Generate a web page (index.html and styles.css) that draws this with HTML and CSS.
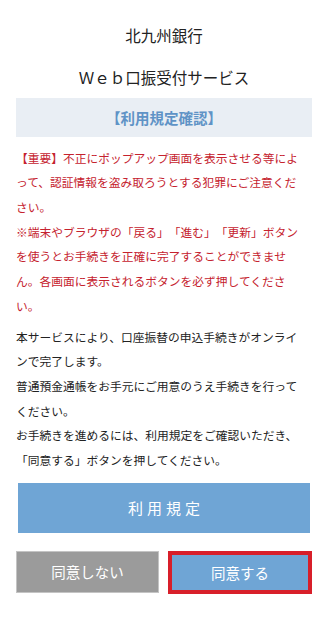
FILE: index.html
```html
<!DOCTYPE html>
<html lang="ja">
<head>
<meta charset="utf-8">
<title>北九州銀行 Ｗｅｂ口振受付サービス</title>
<link rel="stylesheet" href="styles.css">
</head>
<body>
<div class="page">
  <h1 class="bank">北九州銀行</h1>
  <h2 class="service">Ｗｅｂ口振受付サービス</h2>
  <div class="section-title">【利用規定確認】</div>
  <p class="notice">【重要】不正にポップアップ画面を表示させる等によって、認証情報を盗み取ろうとする犯罪にご注意ください。<br>※端末やブラウザの「戻る」「進む」「更新」ボタンを使うとお手続きを正確に完了することができません。各画面に表示されるボタンを必ず押してください。</p>
  <p class="body-text">本サービスにより、口座振替の申込手続きがオンラインで完了します。<br>普通預金通帳をお手元にご用意のうえ手続きを行ってください。<br>お手続きを進めるには、利用規定をご確認いただき、「同意する」ボタンを押してください。</p>
  <button class="btn btn-terms" type="button">利用規定</button>
  <div class="actions">
    <button class="btn btn-decline" type="button">同意しない</button>
    <button class="btn btn-agree" type="button">同意する</button>
  </div>
</div>
</body>
</html>
```
FILE: styles.css
```css
* { box-sizing: border-box; }
html, body {
  margin: 0;
  padding: 0;
  background: #ffffff;
}
body {
  font-family: "Noto Sans CJK JP", "Noto Sans", sans-serif;
  color: #222222;
  text-spacing-trim: space-all;
}
.page {
  padding: 14px 16px 0 16px;
}
.bank, .service {
  margin: 0;
  font-size: 15.5px;
  font-weight: normal;
  line-height: 42px;
  text-align: center;
  color: #222222;
}
.section-title {
  height: 39px;
  line-height: 39px;
  background: #e9eef4;
  color: #5f93c6;
  font-size: 14.5px;
  font-weight: bold;
  text-align: center;
}
.notice, .body-text {
  margin: 0;
  padding-right: 8px;
  font-size: 11.75px;
  line-height: 24.7px;
  text-spacing-trim: space-all;
}
.notice {
  margin-top: 8.6px;
  color: #c5222e;
}
.body-text {
  margin-top: 6px;
  color: #222222;
}
.btn {
  display: block;
  border: none;
  margin: 0;
  padding: 0;
  color: #ffffff;
  font-family: "Noto Sans CJK JP", "Noto Sans", sans-serif;
  text-align: center;
  cursor: pointer;
}
.btn-terms {
  width: 100%;
  height: 50px;
  margin-top: 10px;
  background: #6fa5d5;
  font-size: 15px;
  letter-spacing: 4px;
  padding-left: 4px;
  border-left: 2px solid #ffffff;
  border-right: 2px solid #ffffff;
}
.actions {
  display: grid;
  grid-template-columns: 143px 144px;
  column-gap: 9px;
  margin-top: 18px;
}
.btn-decline {
  height: 42px;
  background: #9b9b9b;
  border: 1px solid #c4c4c4;
  font-size: 14.5px;
}
.btn-agree {
  height: 43px;
  background: #6fa5d5;
  border: 4.5px solid #d81f2a;
  font-size: 14.5px;
}
```
